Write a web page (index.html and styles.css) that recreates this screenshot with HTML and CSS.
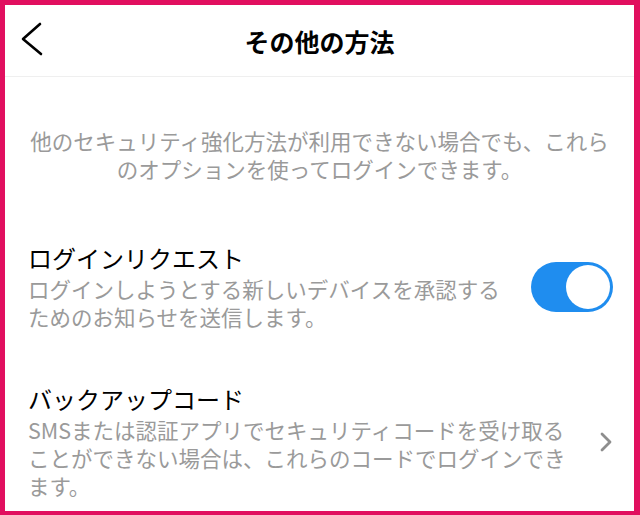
FILE: index.html
```html
<!DOCTYPE html>
<html lang="ja">
<head>
    <meta charset="UTF-8">
    <meta name="viewport" content="width=device-width, initial-scale=1.0">
    <title>その他の方法</title>
    <link rel="stylesheet" href="styles.css">
</head>
<body>
    <div class="screen">
        <header class="header">
            <a class="back" href="#" aria-label="戻る">
                <svg width="24" height="34" viewBox="0 0 24 34">
                    <polyline points="19,2 2,17 20,32" fill="none" stroke="#000" stroke-width="2.6" stroke-linecap="round" stroke-linejoin="round"/>
                </svg>
            </a>
            <h1 class="title">その他の方法</h1>
        </header>

        <p class="intro">他のセキュリティ強化方法が利用できない場合でも、これらのオプションを使ってログインできます。</p>

        <div class="option option-login">
            <div class="option-text">
                <div class="option-title">ログインリクエスト</div>
                <div class="option-desc">ログインしようとする新しいデバイスを承認するためのお知らせを送信します。</div>
            </div>
            <div class="toggle on"><span class="knob"></span></div>
        </div>

        <div class="option option-backup">
            <div class="option-text">
                <div class="option-title">バックアップコード</div>
                <div class="option-desc">SMSまたは認証アプリでセキュリティコードを受け取ることができない場合は、これらのコードでログインできます。</div>
            </div>
            <svg class="chevron" width="12" height="20" viewBox="0 0 12 20">
                <polyline points="2,2 10,10 2,18" fill="none" stroke="#8e8e8e" stroke-width="2.8" stroke-linecap="round" stroke-linejoin="round"/>
            </svg>
        </div>
    </div>
</body>
</html>
```

FILE: styles.css
```css
html, body {
    margin: 0;
    height: 100%;
}
body {
    background: #e10f5f;
    font-family: "Noto Sans CJK JP", "Noto Sans", sans-serif;
    color: #000;
}
.screen {
    margin: 5px 6px 0 5px;
    height: 506px;
    background: #fff;
    overflow: hidden;
}
.header {
    height: 71px;
    border-bottom: 1px solid #efefef;
    display: flex;
    align-items: center;
    justify-content: center;
    position: relative;
}
.back {
    position: absolute;
    left: 16px;
    top: 17px;
    display: block;
    line-height: 0;
}
.title {
    margin: 0;
    font-size: 25px;
    font-weight: bold;
    line-height: 30px;
}
.intro {
    margin: 50px 0 0;
    padding: 0 22px;
    text-align: center;
    color: #9a9a9a;
    font-size: 21.5px;
    line-height: 28px;
}
.option {
    display: flex;
    align-items: center;
    padding-left: 23px;
}
.option-login {
    margin-top: 60px;
    padding-right: 21px;
    gap: 25px;
}
.option-backup {
    margin-top: 53px;
    padding-right: 22px;
    gap: 24px;
}
.option-text {
    flex: 1;
}
.option-title {
    font-size: 24px;
    line-height: 30px;
}
.option-desc {
    margin-top: 2px;
    color: #9a9a9a;
    font-size: 21.5px;
    line-height: 28px;
}
.toggle {
    flex: none;
    width: 82px;
    height: 50px;
    border-radius: 25px;
    background: #1f8def;
    display: flex;
    align-items: center;
    justify-content: flex-end;
    padding: 0 3px;
    box-sizing: border-box;
}
.knob {
    width: 44px;
    height: 44px;
    border-radius: 50%;
    background: #fff;
}
.chevron {
    flex: none;
}
```
